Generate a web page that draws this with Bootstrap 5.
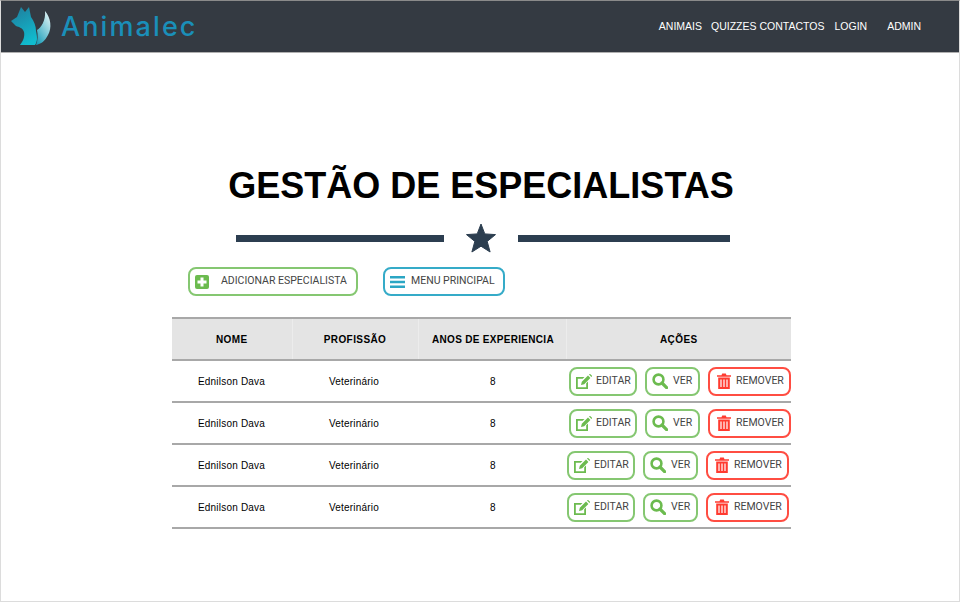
<!DOCTYPE html>
<html lang="pt">
<head>
    <meta charset="UTF-8">
    <meta name="viewport" content="width=device-width, initial-scale=1.0">
    <link href="https://cdn.jsdelivr.net/npm/bootstrap@5.3.0/dist/css/bootstrap.min.css" rel="stylesheet">
    <title>Animalec</title>
    <style>
        body {
            height: 602px;
            overflow: hidden;
            border: 1px solid #dcdcdc;
            border-top-color: #8a8a8a;
            font-family: "Liberation Sans", Arial, sans-serif;
            color: #000;
        }
        .top-bar {
            height: 52px;
            background: #343a42;
            border-bottom: 1px solid #b0b0b0;
            padding: 0;
        }
        .brand-box { margin-left: 9px; gap: 9px; }
        .brand-name {
            font-family: Inter, sans-serif;
            font-weight: 500;
            font-size: 27px;
            letter-spacing: 2.1px;
            color: #1a8fb9;
            line-height: 1;
            padding-bottom: 1px;
        }
        .top-links { font-size: 10.5px; margin-right: 38px; }
        .top-links a { color: #fff; text-decoration: none; }
        .page-title {
            font-size: 36px;
            font-weight: 700;
            margin: 111px 0 0 0;
            line-height: 44px;
            text-align: center;
            padding-left: 2px;
        }
        .title-rule { margin: 14px 0 0 235px; width: 494px; height: 32px; }
        .rule-bar { height: 7px; background: #2c3e50; }
        .page-area { margin-left: 171px; width: 619px; }
        .top-actions { margin: 13px 0 0 16px; gap: 25px; }
        .pill-btn {
            display: flex;
            align-items: center;
            height: 29px;
            background: #fff;
            border: 2px solid;
            border-radius: 8px;
            font-family: Roboto, sans-serif;
            font-size: 10.5px;
            color: #444;
            padding: 0;
            white-space: nowrap;
            line-height: 1;
        }
        .pill-btn svg { flex-shrink: 0; }
        .pill-green { border-color: #85c771; }
        .pill-blue { border-color: #35abc8; }
        .pill-red { border-color: #ff4d42; }
        .btn-add { width: 170px; padding-left: 5px; gap: 12px; }
        .btn-menu { width: 122px; padding-left: 5px; gap: 6px; }
        .btn-edit { width: 68px; padding-left: 5px; gap: 4px; }
        .btn-see { width: 55px; padding-left: 5px; gap: 5px; }
        .btn-del { width: 83px; padding-left: 7px; gap: 5px; }
        .staff-table { margin: 21px 0 0 0; table-layout: fixed; width: 619px; font-size: 10px; }
        .staff-table th, .staff-table td {
            text-align: center;
            vertical-align: middle;
            padding: 0;
            border-bottom: 2px solid #a8a8a8;
            color: #000;
        }
        .staff-table th {
            height: 42px;
            background: #e4e4e4;
            border-top: 2px solid #a8a8a8;
            border-right: 1px solid #ececec;
            font-size: 10px;
            letter-spacing: .4px;
        }
        .staff-table th:last-child { border-right: 0; }
        .staff-table th:nth-child(3), .staff-table td:nth-child(3) { padding-left: 2px; }
        .staff-table td:first-child { padding-right: 1px; }
        .staff-table td:nth-child(2) { padding-right: 2px; }
        .staff-table td { height: 42px; letter-spacing: .2px; }
        .acts { display: flex; justify-content: flex-end; gap: 8px; }
        .acts-shift { padding-right: 2px; }
    </style>
</head>
<body>
    <nav class="navbar top-bar">
        <div class="d-flex align-items-center brand-box">
            <svg width="42" height="42" viewBox="0 0 42 42">
                <defs>
                    <linearGradient id="foxA" x1="0.2" y1="0" x2="0.6" y2="1">
                        <stop offset="0" stop-color="#1f7f9e"/>
                        <stop offset="1" stop-color="#10bccf"/>
                    </linearGradient>
                    <linearGradient id="foxB" x1="0.8" y1="0" x2="0.2" y2="1">
                        <stop offset="0" stop-color="#e2f4f6"/>
                        <stop offset="1" stop-color="#1c9fba"/>
                    </linearGradient>
                </defs>
                <path d="M1 15 L7 11 L11 1 L15 6 L19 1 L21 11 C24 15 26 20 26 25 C27 30 28 35 25 39 L10 39 C13 35 15 31 14 26 C13 22 9 21 6 20 Z" fill="url(#foxA)"/>
                <path d="M35 5 C41 12 42 22 38 29 C35 35 31 38 26 39 C28 34 28 29 27 24 C31 22 36 14 35 5 Z" fill="url(#foxB)"/>
            </svg>
            <span class="brand-name">Animalec</span>
        </div>
        <div class="d-flex top-links">
            <a href="#" style="margin-right:9px">ANIMAIS</a>
            <a href="#" style="margin-right:3px">QUIZZES</a>
            <a href="#" style="margin-right:10px">CONTACTOS</a>
            <a href="#" style="margin-right:20px">LOGIN</a>
            <a href="#">ADMIN</a>
        </div>
    </nav>

    <h1 class="page-title">GESTÃO DE ESPECIALISTAS</h1>

    <div class="d-flex align-items-center justify-content-between title-rule">
        <div class="rule-bar" style="width:208px"></div>
        <svg width="30" height="29" viewBox="0 0 30 29"><path d="M15 0 L18.8 9.9 L29.5 10.6 L21.2 17.4 L24.1 28 L15 22.2 L5.9 28 L8.8 17.4 L.5 10.6 L11.2 9.9 Z" fill="#2c3e50" stroke="#2c3e50" stroke-linejoin="round"/></svg>
        <div class="rule-bar" style="width:212px"></div>
    </div>

    <div class="page-area">
        <div class="d-flex top-actions">
            <button class="pill-btn pill-green btn-add">
                <svg width="14" height="14" viewBox="0 0 14 14"><rect width="14" height="14" rx="2" fill="#6cbb4f"/><path d="M5.5 2.5h3v3h3v3h-3v3h-3v-3h-3v-3h3z" fill="#fff"/></svg>
                ADICIONAR ESPECIALISTA
            </button>
            <button class="pill-btn pill-blue btn-menu">
                <svg width="15" height="14" viewBox="0 0 15 14"><path d="M0 1h15v2.4H0zM0 5.8h15v2.4H0zM0 10.6h15V13H0z" fill="#2ba6c4"/></svg>
                MENU PRINCIPAL
            </button>
        </div>

        <table class="table staff-table">
            <colgroup><col style="width:120px"><col style="width:126px"><col style="width:148px"><col style="width:225px"></colgroup>
            <thead>
                <tr><th>NOME</th><th>PROFISSÃO</th><th style="letter-spacing:.3px">ANOS DE EXPERIENCIA</th><th>AÇÕES</th></tr>
            </thead>
            <tbody id="rows"></tbody>
        </table>
    </div>

    <script src="https://cdn.jsdelivr.net/npm/bootstrap@5.3.0/dist/js/bootstrap.bundle.min.js"></script>
    <script>
        const editIcon = '<svg width="16" height="15" viewBox="0 0 16 15"><path d="M0 3h8.5L6.7 4.8H1.8v8.4h8.4V9.3L12 7.5V15H0z" fill="#6cbb4f"/><path d="M5 11l.8-3.2L12 1.6l2.4 2.4-6.2 6.2zM13 .6l.4-.4a.7.7 0 0 1 1 0l1.4 1.4a.7.7 0 0 1 0 1l-.4.4z" fill="#6cbb4f"/></svg>';
        const seeIcon = '<svg width="16" height="16" viewBox="0 0 16 16"><circle cx="6.5" cy="6.5" r="4.9" fill="none" stroke="#6cbb4f" stroke-width="2.6"/><path d="M10 10l4.6 4.6" stroke="#6cbb4f" stroke-width="3.2" stroke-linecap="round"/></svg>';
        const delIcon = '<svg width="14" height="16" viewBox="0 0 14 16"><path d="M0 2.2h4.5L5.2.6h3.6l.7 1.6H14v1.6H0zM1.2 4.6h11.6V16H1.2z" fill="#ff3b30"/><path d="M4 6.4v7.6M7 6.4v7.6M10 6.4v7.6" stroke="#fff" stroke-width="1.2"/></svg>';

        let html = '';
        for (let i = 0; i < 4; i++) {
            const shift = i > 1 ? ' acts-shift' : '';
            html += `<tr>
                <td>Ednilson Dava</td>
                <td>Veterinário</td>
                <td>8</td>
                <td><div class="acts${shift}">
                    <button class="pill-btn pill-green btn-edit">${editIcon}EDITAR</button>
                    <button class="pill-btn pill-green btn-see">${seeIcon}VER</button>
                    <button class="pill-btn pill-red btn-del">${delIcon}REMOVER</button>
                </div></td>
            </tr>`;
        }
        document.getElementById('rows').innerHTML = html;
    </script>
</body>
</html>
